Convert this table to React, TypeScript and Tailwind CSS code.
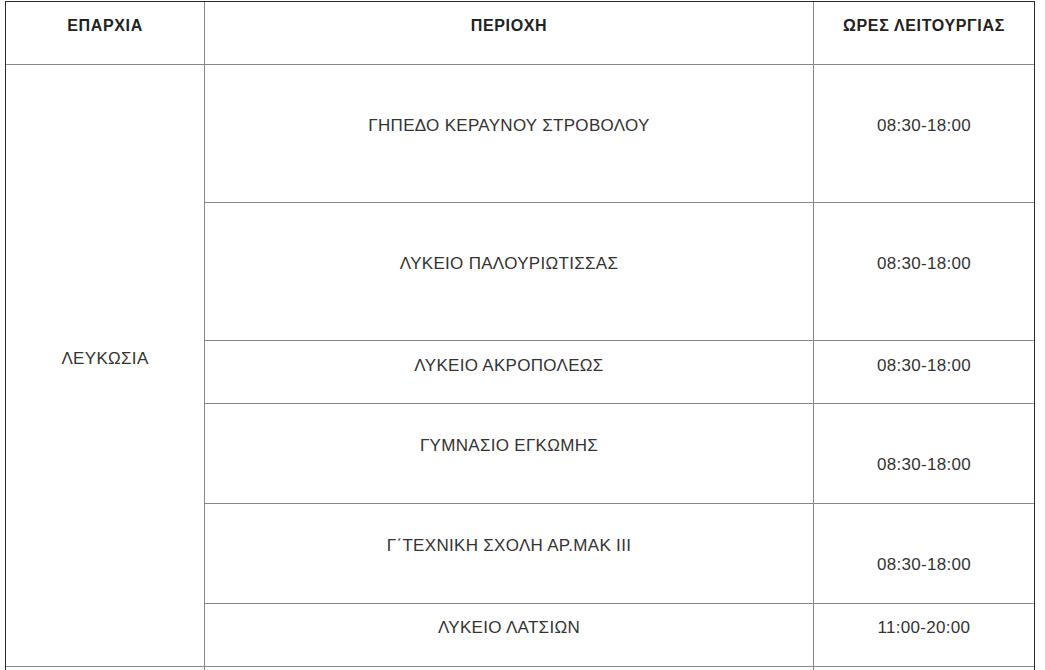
const rows = [
  { area: 'ΓΗΠΕΔΟ ΚΕΡΑΥΝΟΥ ΣΤΡΟΒΟΛΟΥ', hours: '08:30-18:00', h: 'h-[138px]', areaPt: 'pt-[51px]', hoursPt: 'pt-[51px]' },
  { area: 'ΛΥΚΕΙΟ ΠΑΛΟΥΡΙΩΤΙΣΣΑΣ', hours: '08:30-18:00', h: 'h-[138px]', areaPt: 'pt-[51px]', hoursPt: 'pt-[51px]' },
  { area: 'ΛΥΚΕΙΟ ΑΚΡΟΠΟΛΕΩΣ', hours: '08:30-18:00', h: 'h-[63px]', areaPt: 'pt-[15px]', hoursPt: 'pt-[15px]' },
  { area: 'ΓΥΜΝΑΣΙΟ ΕΓΚΩΜΗΣ', hours: '08:30-18:00', h: 'h-[100px]', areaPt: 'pt-[32px]', hoursPt: 'pt-[51px]' },
  { area: 'Γ΄ΤΕΧΝΙΚΗ ΣΧΟΛΗ ΑΡ.ΜΑΚ ΙΙΙ', hours: '08:30-18:00', h: 'h-[100px]', areaPt: 'pt-[32px]', hoursPt: 'pt-[51px]' },
  { area: 'ΛΥΚΕΙΟ ΛΑΤΣΙΩΝ', hours: '11:00-20:00', h: 'h-[63px]', areaPt: 'pt-[14px]', hoursPt: 'pt-[14px]' },
];

export default function App() {
  return (
    <div className="min-h-screen bg-white pt-px font-['Liberation_Sans',Arial,sans-serif] text-[17px] leading-[20px] tracking-[0.3px] text-[#333]">
      <div className="ml-[5px] w-[1030px] border border-[#2b2b2b]">
        {/* Header */}
        <div className="grid h-[63px] grid-cols-[199px_609px_220px] border-b border-[#888] text-[16px] font-bold tracking-[0.65px] text-[#222]">
          <div className="border-r border-[#888] pt-[14px] text-center">ΕΠΑΡΧΙΑ</div>
          <div className="border-r border-[#888] pt-[14px] text-center">ΠΕΡΙΟΧΗ</div>
          <div className="pt-[14px] text-center">ΩΡΕΣ ΛΕΙΤΟΥΡΓΙΑΣ</div>
        </div>

        {/* Body */}
        <div className="flex">
          <div className="w-[199px] shrink-0 border-r border-b border-[#888] pt-[284px] text-center">ΛΕΥΚΩΣΙΑ</div>
          <div className="flex flex-1 flex-col">
            {rows.map((r) => (
              <div key={r.area} className={`grid grid-cols-[609px_220px] border-b border-[#888] ${r.h}`}>
                <div className={`border-r border-[#888] text-center ${r.areaPt}`}>{r.area}</div>
                <div className={`text-center ${r.hoursPt}`}>{r.hours}</div>
              </div>
            ))}
          </div>
        </div>

        <div className="grid h-[63px] grid-cols-[199px_609px_220px]">
          <div className="border-r border-[#888]"></div>
          <div className="border-r border-[#888]"></div>
          <div></div>
        </div>
      </div>
    </div>
  );
}
